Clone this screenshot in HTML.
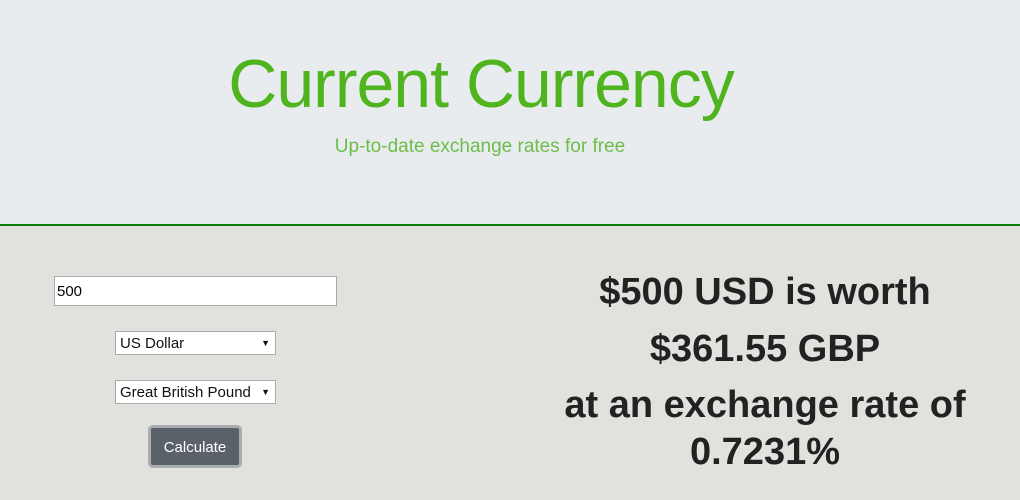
<!DOCTYPE html>
<html><head><style>
html,body{margin:0;padding:0;width:1020px;height:500px;overflow:hidden;font-family:"Liberation Sans",sans-serif}
.top{position:absolute;left:0;top:0;width:1020px;height:224px;background:#e9ecef;border-bottom:2px solid #0a7d0a}
.bot{position:absolute;left:0;top:226px;width:1020px;height:274px;background:#e1e2de}
.title{position:absolute;left:224px;top:45px;width:514px;text-align:center;font-size:68px;color:#4fb41d;font-weight:normal;white-space:nowrap;letter-spacing:-1px}
.sub{position:absolute;left:280px;top:136px;width:400px;text-align:center;font-size:19px;color:#6cbd4a}
input{position:absolute;left:54px;top:276px;width:283px;height:30px;box-sizing:border-box;border:1px solid #aaa;background:#fff;font:15px "Liberation Sans",sans-serif;padding:0 2px;margin:0}
.sel{position:absolute;left:115px;width:161px;height:24px;box-sizing:border-box;border:1px solid #aaa;background:#fff;font-size:15px;color:#111;line-height:24px;padding-left:4px;white-space:nowrap}
.sel span{position:absolute;right:5px;top:0;font-size:9px;line-height:22px}
.btn{position:absolute;left:148px;top:425px;width:94px;height:43px;box-sizing:border-box;border:3px solid #a9adb1;border-radius:5px;background:#5a6168;color:#fff;font-size:15px;text-align:center;line-height:40px}
.res{position:absolute;left:510px;width:510px;text-align:center;font-weight:bold;font-size:38px;color:#222;white-space:nowrap}
</style></head><body>
<div class="top"></div>
<div class="bot"></div>
<div class="title">Current Currency</div>
<div class="sub">Up-to-date exchange rates for free</div>
<input value="500">
<div class="sel" style="top:331px">US Dollar<span>▼</span></div>
<div class="sel" style="top:380px">Great British Pound<span>▼</span></div>
<div class="btn">Calculate</div>
<div class="res" style="top:271px">$500 USD is worth</div>
<div class="res" style="top:328px">$361.55 GBP</div>
<div class="res" style="top:384px">at an exchange rate of</div>
<div class="res" style="top:431px">0.7231%</div>
</body></html>
